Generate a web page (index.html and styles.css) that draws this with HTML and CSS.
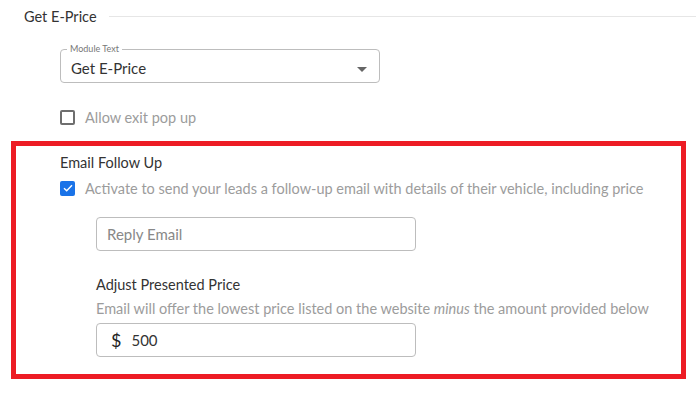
FILE: index.html
```html
<!DOCTYPE html>
<html lang="en">
<head>
    <meta charset="UTF-8">
    <meta name="viewport" content="width=device-width, initial-scale=1.0">
    <title>Get E-Price</title>
    <link rel="stylesheet" href="styles.css">
</head>
<body>

<div class="section-title">
    <span>Get E-Price</span>
    <div class="section-line"></div>
</div>

<div class="module">
    <fieldset class="select-box">
        <legend>Module Text</legend>
        <span class="select-value">Get E-Price</span>
        <span class="select-arrow"></span>
    </fieldset>

    <label class="check-row">
        <span class="check"></span>
        <span class="check-text">Allow exit pop up</span>
    </label>
</div>

<!-- 高亮区域 -->
<div class="highlight">
    <div class="group-title">Email Follow Up</div>
    <label class="check-row check-row-tight">
        <span class="check checked">
            <svg width="10" height="8" viewBox="0 0 10 8"><path d="M1 4.2 L3.7 6.8 L9 1.3" fill="none" stroke="#fff" stroke-width="1.4"/></svg>
        </span>
        <span class="check-text">Activate to send your leads a follow-up email with details of their vehicle, including price</span>
    </label>

    <div class="sub">
        <div class="text-input"><span class="placeholder">Reply Email</span></div>

        <div class="field-title">Adjust Presented Price</div>
        <div class="field-hint">Email will offer the lowest price listed on the website <em>minus</em> the amount provided below</div>
        <div class="text-input">
            <span class="prefix">$</span>
            <span class="value">500</span>
        </div>
    </div>
</div>

</body>
</html>
```

FILE: styles.css
```css
body {
    font-family: Lato, "Open Sans", sans-serif;
    margin: 0;
    padding: 0;
    background-color: #fff;
    color: #333;
    width: 696px;
    height: 394px;
    overflow: hidden;
}
.section-title {
    display: flex;
    align-items: center;
    height: 32px;
    padding-left: 24px;
    font-size: 14.5px;
    color: #333;
}
.section-line {
    flex: 1;
    height: 1px;
    background-color: #e6e6e6;
    margin-left: 12px;
}
.module {
    padding-left: 60px;
}
.select-box {
    position: relative;
    box-sizing: border-box;
    width: 320px;
    height: 39px;
    margin: 12px 0 0 0;
    padding: 0 0 0 10px;
    border: 1px solid #bdbdbd;
    border-radius: 4px;
    display: flex;
    align-items: center;
}
.select-box legend {
    font-size: 9px;
    color: #777;
    padding: 0 3px;
    margin-left: -4px;
    line-height: 10px;
}
.select-value {
    font-size: 15px;
    color: #333;
    margin-top: 0;
}
.select-arrow {
    position: absolute;
    right: 12px;
    top: 13px;
    width: 0;
    height: 0;
    border-left: 5px solid transparent;
    border-right: 5px solid transparent;
    border-top: 5px solid #666;
}
.check-row {
    display: flex;
    align-items: center;
    gap: 10px;
    height: 20px;
    margin-top: 24px;
}
.check-row-tight {
    margin-top: 5px;
}
.check {
    box-sizing: border-box;
    width: 15px;
    height: 15px;
    border: 2px solid #6e6e6e;
    border-radius: 2px;
    display: flex;
    align-items: center;
    justify-content: center;
}
.check.checked {
    border: none;
    background-color: #1a73e8;
}
.check-text {
    font-size: 14.5px;
    color: #9c9c9c;
}
.highlight {
    box-sizing: border-box;
    width: 675px;
    height: 238px;
    margin: 14px 0 0 11px;
    border: 5px solid #ed1c24;
    padding: 7px 0 0 44px;
}
.group-title {
    font-size: 14.5px;
    color: #333;
    height: 20px;
    line-height: 20px;
}
.sub {
    padding-left: 36px;
    padding-top: 19px;
}
.text-input {
    box-sizing: border-box;
    width: 320px;
    height: 34px;
    border: 1px solid #bdbdbd;
    border-radius: 4px;
    display: flex;
    align-items: center;
    padding-left: 10px;
    font-size: 15px;
}
.placeholder {
    color: #888;
}
.prefix {
    font-size: 18px;
    color: #222;
    margin-left: 4px;
    margin-right: 10px;
}
.value {
    color: #333;
}
.field-title {
    margin-top: 24px;
    font-size: 14.5px;
    color: #333;
    height: 20px;
    line-height: 20px;
}
.field-hint {
    font-size: 14.5px;
    color: #9c9c9c;
    height: 24px;
    line-height: 24px;
    margin: 2px 0 2px 0;
}
.field-hint em {
    font-style: italic;
}
```
